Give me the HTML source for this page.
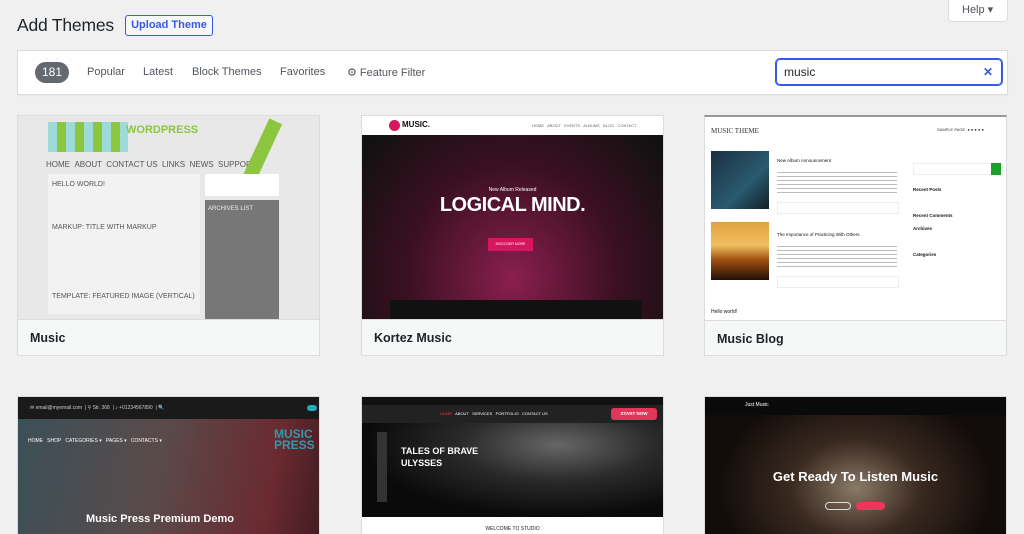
<!DOCTYPE html>
<html><head><meta charset="utf-8"><style>
*{box-sizing:border-box;margin:0;padding:0}
body{width:1024px;height:534px;overflow:hidden;background:#f0f0f1;font-family:"Liberation Sans",sans-serif;color:#1d2327;position:relative}
.abs{position:absolute}
h1{position:absolute;left:17px;top:15px;font-size:17.5px;font-weight:400;color:#1d2327;letter-spacing:-.2px}
.up{position:absolute;left:125px;top:15px;width:88px;height:21px;border:1px solid #3858e9;border-radius:3px;background:#f6f7f7;color:#3858e9;font-size:11px;font-weight:600;text-align:center;line-height:19px}
.help{position:absolute;left:948px;top:0;width:60px;height:22px;background:#fff;border:1px solid #dcdcde;border-top:none;border-radius:0 0 4px 4px;font-size:11px;color:#50575e;line-height:20px;padding-left:13px}
.bar{position:absolute;left:17px;top:50px;width:991px;height:45px;background:#fff;border:1px solid #dcdcde;box-shadow:0 1px 1px rgba(0,0,0,.04)}
.cnt{position:absolute;left:17px;top:11px;width:34px;height:21px;border-radius:11px;background:#646970;color:#fff;font-size:12px;text-align:center;line-height:21px}
.nav{position:absolute;top:15px;font-size:11px;color:#50575e}
.search{position:absolute;left:758px;top:8px;width:226px;height:26px;border:1px solid #3858e9;border-radius:4px;box-shadow:0 0 0 1px #3858e9;font-size:12px;line-height:24px;padding-left:7px;color:#1d2327}
.search b{position:absolute;right:8px;top:0;color:#3858e9;font-size:12px}
.card{position:absolute;width:303px;background:#fff;border:1px solid #dcdcde;overflow:hidden}
.shot{position:absolute;left:0;top:0;width:301px;height:203px;overflow:hidden}
.cap{position:absolute;left:0;top:203px;width:301px;height:37px;background:#f6f7f7;border-top:1px solid #dcdcde;font-size:12.5px;font-weight:600;padding:11px 0 0 12px;color:#1d2327}
</style></head><body>
<h1>Add Themes</h1>
<div class="up">Upload Theme</div>
<div class="help">Help ▾</div>
<div class="bar">
<div class="cnt">181</div>
<div class="nav" style="left:69px">Popular</div>
<div class="nav" style="left:125px">Latest</div>
<div class="nav" style="left:174px">Block Themes</div>
<div class="nav" style="left:262px">Favorites</div>
<div class="nav" style="left:329px">⚙ Feature Filter</div>
<div class="search">music<b>✕</b></div>
</div>

<div class="card" style="left:17px;top:115px;height:241px">
<div class="shot" style="background:#e8e8e8">
<div class="abs" style="left:30px;top:6px;width:80px;height:30px;background:repeating-linear-gradient(90deg,#9fdada 0 9px,#8cc63f 9px 18px)"></div>
<div class="abs" style="left:108px;top:8px;font-size:11px;color:#8cc63f;font-weight:700">WORDPRESS</div>
<div class="abs" style="left:28px;top:44px;font-size:8px;color:#555">HOME &nbsp;ABOUT &nbsp;CONTACT US &nbsp;LINKS &nbsp;NEWS &nbsp;SUPPORT</div>
<div class="abs" style="left:236px;top:2px;width:14px;height:70px;background:#8cc63f;transform:rotate(25deg)"></div>
<div class="abs" style="left:30px;top:58px;width:152px;height:140px;background:#f2f2f2"></div>
<div class="abs" style="left:34px;top:65px;font-size:7px;color:#555">HELLO WORLD!</div>
<div class="abs" style="left:34px;top:108px;font-size:7px;color:#555">MARKUP: TITLE WITH MARKUP</div>
<div class="abs" style="left:34px;top:177px;font-size:7px;color:#555">TEMPLATE: FEATURED IMAGE (VERTICAL)</div>
<div class="abs" style="left:187px;top:58px;width:74px;height:22px;background:#fff"></div>
<div class="abs" style="left:187px;top:84px;width:74px;height:120px;background:#777"></div>
<div class="abs" style="left:190px;top:90px;font-size:6px;color:#eee">ARCHIVES LIST</div>
</div>
<div class="cap">Music</div>
</div>

<div class="card" style="left:361px;top:115px;height:241px">
<div class="shot" style="background:radial-gradient(ellipse at 50% 80%,#8a1f4f 0,#3a1020 50%,#111 90%)">
<div class="abs" style="left:0;top:0;width:301px;height:19px;background:#fff"></div>
<div class="abs" style="left:27px;top:4px;width:11px;height:11px;border-radius:50%;background:#d6175f"></div>
<div class="abs" style="left:40px;top:4px;font-size:8px;font-weight:700;color:#111">MUSIC.</div>
<div class="abs" style="left:170px;top:7px;font-size:4px;color:#666">HOME &nbsp; ABOUT &nbsp; EVENTS &nbsp; ALBUMS &nbsp; BLOG &nbsp; CONTACT</div>
<div class="abs" style="left:0;top:71px;width:301px;text-align:center;font-size:5px;color:#fff">New Album Released</div>
<div class="abs" style="left:0;top:78px;width:301px;text-align:center;font-size:20px;font-weight:700;color:#fff;letter-spacing:-.5px">LOGICAL MIND.</div>
<div class="abs" style="left:126px;top:122px;width:45px;height:13px;background:#d6175f;font-size:3.5px;color:#fff;text-align:center;line-height:13px">DISCOVER MORE</div>
<div class="abs" style="left:28px;top:184px;width:252px;height:19px;background:#111"></div>
</div>
<div class="cap">Kortez Music</div>
</div>

<div class="card" style="left:704px;top:115px;height:241px;border-top:2px solid #999">
<div class="shot" style="background:#fff">
<div class="abs" style="left:6px;top:10px;font-size:7px;font-family:'Liberation Serif',serif;color:#333">MUSIC THEME</div>
<div class="abs" style="left:232px;top:10px;font-size:4px;color:#333">SAMPLE PAGE &nbsp;● ● ● ● ●</div>
<div class="abs" style="left:6px;top:34px;width:58px;height:58px;background:linear-gradient(135deg,#1a3040,#2a5a70 60%,#132028)"></div>
<div class="abs" style="left:6px;top:105px;width:58px;height:58px;background:linear-gradient(180deg,#e0a040,#f0c060 40%,#a05010 65%,#201008)"></div>
<div class="abs" style="left:72px;top:41px;font-size:4.5px;color:#111">New Album Announcement</div>
<div class="abs" style="left:72px;top:115px;font-size:4.5px;color:#111">The Importance of Practicing With Others</div>
<div class="abs" style="left:72px;top:55px;width:120px;height:22px;background:repeating-linear-gradient(180deg,#bbb 0 1px,#fff 1px 4px)"></div>
<div class="abs" style="left:72px;top:129px;width:120px;height:22px;background:repeating-linear-gradient(180deg,#bbb 0 1px,#fff 1px 4px)"></div>
<div class="abs" style="left:72px;top:85px;width:122px;height:12px;border:1px solid #eee"></div>
<div class="abs" style="left:72px;top:159px;width:122px;height:12px;border:1px solid #eee"></div>
<div class="abs" style="left:208px;top:46px;width:90px;height:12px;border:1px solid #eee"></div>
<div class="abs" style="left:286px;top:46px;width:10px;height:12px;background:#1a9f29"></div>
<div class="abs" style="left:208px;top:66px;font-size:4.5px;font-weight:700;color:#111;line-height:13px">Recent Posts<br><br>Recent Comments<br>Archives<br><br>Categories</div>
<div class="abs" style="left:6px;top:192px;font-size:5px;color:#111">Hello world!</div>
</div>
<div class="cap">Music Blog</div>
</div>

<div class="card" style="left:17px;top:396px;height:138px;border-bottom:none">
<div class="shot" style="background:linear-gradient(100deg,#3a5058 0,#5a4a4a 45%,#6a2a30 80%,#3a1a20)">
<div class="abs" style="left:0;top:0;width:301px;height:22px;background:#1a1a1a"></div>
<div class="abs" style="left:12px;top:8px;font-size:5px;color:#ccc">✉ email@myemail.com &nbsp;| ⚲ Str. 368 &nbsp;| ♪ +01234567890 &nbsp;| 🔍</div>
<div class="abs" style="left:289px;top:8px;width:10px;height:6px;border-radius:3px;background:#2ab"></div>
<div class="abs" style="left:10px;top:41px;font-size:5px;color:#fff">HOME &nbsp; SHOP &nbsp; CATEGORIES ▾ &nbsp; PAGES ▾ &nbsp; CONTACTS ▾</div>
<div class="abs" style="left:256px;top:32px;font-size:12px;font-weight:700;color:#39a;line-height:11px">MUSIC<br>PRESS</div>
<div class="abs" style="left:68px;top:116px;font-size:11px;font-weight:700;color:#fff">Music Press Premium Demo</div>
</div></div>

<div class="card" style="left:361px;top:396px;height:138px;border-bottom:none">
<div class="shot" style="background:#fff">
<div class="abs" style="left:0;top:0;width:301px;height:120px;background:radial-gradient(ellipse at 65% 40%,#666 0,#2a2a2a 35%,#0a0a0a 70%)"></div>
<div class="abs" style="left:0;top:0;width:301px;height:8px;background:#111"></div>
<div class="abs" style="left:0;top:8px;width:301px;height:18px;background:#222"></div>
<div class="abs" style="left:78px;top:14px;font-size:4px;color:#fff"><span style="color:#e34">HOME</span> &nbsp; ABOUT &nbsp; SERVICES &nbsp; PORTFOLIO &nbsp; CONTACT US</div>
<div class="abs" style="left:249px;top:11px;width:46px;height:12px;border-radius:3px;background:#e3345a;font-size:4.5px;color:#fff;text-align:center;line-height:12px;font-weight:700">START NOW</div>
<div class="abs" style="left:15px;top:35px;width:10px;height:70px;background:#333"></div>
<div class="abs" style="left:39px;top:48px;font-size:9px;font-weight:700;color:#fff;line-height:12px">TALES OF BRAVE<br>ULYSSES</div>
<div class="abs" style="left:0;top:129px;width:301px;text-align:center;font-size:5px;color:#222">WELCOME TO STUDIO</div>
</div></div>

<div class="card" style="left:704px;top:396px;height:138px;border-bottom:none">
<div class="shot" style="background:radial-gradient(ellipse at 50% 45%,#8a7a68 0,#3a2a20 30%,#120c0a 65%)">
<div class="abs" style="left:0;top:0;width:301px;height:18px;background:#0a0a0a"></div>
<div class="abs" style="left:40px;top:5px;font-size:5px;color:#fff">Just Music</div>
<div class="abs" style="left:0;top:72px;width:301px;text-align:center;font-size:13px;font-weight:700;color:#fff">Get Ready To Listen Music</div>
<div class="abs" style="left:120px;top:105px;width:26px;height:8px;border:1px solid #ddd;border-radius:4px"></div>
<div class="abs" style="left:151px;top:105px;width:29px;height:8px;background:#f0345a;border-radius:4px"></div>
</div></div>
</body></html>
